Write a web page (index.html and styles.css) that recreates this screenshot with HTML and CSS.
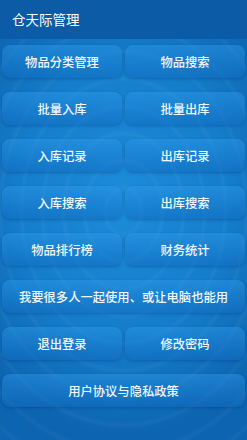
FILE: index.html
```html
<!DOCTYPE html>
<html lang="zh">
<head>
    <meta charset="UTF-8">
    <meta name="viewport" content="width=device-width, initial-scale=1.0">
    <title>仓天际管理</title>
    <link rel="stylesheet" href="styles.css">
</head>
<body>

    <!-- 顶部标题栏 -->
    <header class="top-bar">仓天际管理</header>

    <!-- 功能按钮 -->
    <section class="menu">
        <button class="menu-btn">物品分类管理</button>
        <button class="menu-btn">物品搜索</button>
        <button class="menu-btn">批量入库</button>
        <button class="menu-btn">批量出库</button>
        <button class="menu-btn">入库记录</button>
        <button class="menu-btn">出库记录</button>
        <button class="menu-btn">入库搜索</button>
        <button class="menu-btn">出库搜索</button>
        <button class="menu-btn">物品排行榜</button>
        <button class="menu-btn">财务统计</button>
        <button class="menu-btn wide">我要很多人一起使用、或让电脑也能用</button>
        <button class="menu-btn">退出登录</button>
        <button class="menu-btn">修改密码</button>
        <button class="menu-btn wide">用户协议与隐私政策</button>
    </section>

</body>
</html>
```

FILE: styles.css
```css
/* 页面背景 */
body {
    margin: 0;
    width: 247px;
    height: 440px;
    overflow: hidden;
    font-family: "Noto Sans CJK SC", "Noto Sans", sans-serif;
    color: #fff;
    background:
        repeating-radial-gradient(ellipse 55% 40% at 50% 48%, rgba(255, 255, 255, 0) 0, rgba(255, 255, 255, 0) 15px, rgba(255, 255, 255, 0.04) 18px, rgba(255, 255, 255, 0) 21px),
        radial-gradient(ellipse 75% 55% at 50% 45%, #1c8cd9 0%, #157ecb 55%, #0d64b0 100%);
}

/* 标题栏 */
.top-bar {
    height: 39px;
    line-height: 38px;
    padding-left: 12px;
    font-size: 13.5px;
    background: #0b5ba6;
}

/* 按钮网格 */
.menu {
    display: grid;
    grid-template-columns: 1fr 1fr;
    column-gap: 3px;
    row-gap: 14px;
    padding: 6px 2px 0;
}

.menu-btn {
    height: 33px;
    border: none;
    border-radius: 8px;
    background: linear-gradient(to bottom, rgba(45, 155, 235, 0.45), rgba(15, 105, 190, 0.5));
    box-shadow: 0 1px 3px rgba(0, 40, 100, 0.3);
    color: #f2f8ff;
    font-family: inherit;
    font-size: 12.3px;
    font-weight: 500;
    padding: 0;
}

.menu-btn.wide { grid-column: span 2; }
```
